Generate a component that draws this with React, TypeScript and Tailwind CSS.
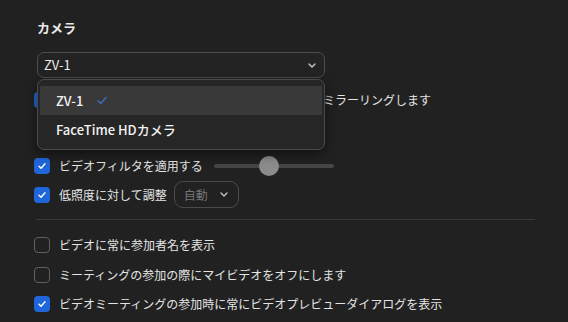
import type { ReactNode } from 'react'

const font = { fontFamily: '"Noto Sans CJK JP", "Noto Sans", sans-serif' }

function Checkbox({ checked }: { checked: boolean }) {
  if (!checked) {
    return <span className="w-4 h-4 shrink-0 rounded-[4px] border border-[#5f5f5f]" />
  }
  return (
    <span className="w-4 h-4 shrink-0 rounded-[4px] bg-[#1e66d9] flex items-center justify-center">
      <svg width="10" height="10" viewBox="0 0 10 10" fill="none">
        <path d="M2 5.2 L4.1 7.3 L8 2.8" stroke="white" strokeWidth="1.4" strokeLinecap="round" strokeLinejoin="round" />
      </svg>
    </span>
  )
}

function Chevron({ color = '#d0d0d0' }: { color?: string }) {
  return (
    <svg width="8" height="5" viewBox="0 0 8 5" fill="none">
      <path d="M1 1 L4 4 L7 1" stroke={color} strokeWidth="1.3" strokeLinecap="round" strokeLinejoin="round" />
    </svg>
  )
}

function Row({ checked, children, className = '' }: { checked: boolean; children: ReactNode; className?: string }) {
  return (
    <div className={`flex items-center h-[28px] ${className}`}>
      <Checkbox checked={checked} />
      <span className="ml-[9px] text-[12px] text-[#e4e4e4] whitespace-nowrap leading-none">{children}</span>
    </div>
  )
}

export default function App() {
  return (
    <div style={font} className="w-[568px] h-[322px] bg-[#212121] overflow-hidden pl-[34px] pt-[19px]">
      <div className="ml-[3px] h-[18px] flex items-center text-[13px] font-bold text-[#e8e8e8]">カメラ</div>

      {/* camera select + open menu */}
      <div className="relative ml-[3px] mt-[15px] w-[288px]">
        <div className="h-[26px] rounded-[7px] border border-[#4e4e4e] bg-[#232323] flex items-center justify-between pl-[6px] pr-[8px]">
          <span className="text-[13px] text-[#ececec]">ZV-1</span>
          <Chevron />
        </div>

        <div className="absolute z-10 left-0 top-[27px] w-[288px] h-[71px] rounded-[7px] border border-[#4a4a4a] bg-[#262626] shadow-[0_4px_12px_rgba(0,0,0,0.5)] pt-[6px] px-[2px]">
          <div className="h-[29px] bg-[#393939] flex items-center pl-[16px]">
            <span className="text-[13px] font-medium text-[#f2f2f2]">ZV-1</span>
            <svg className="ml-[14px]" width="10" height="9" viewBox="0 0 10 9" fill="none">
              <path d="M1 4.8 L3.7 7.5 L9 1.5" stroke="#3c6cbd" strokeWidth="1.4" strokeLinecap="round" strokeLinejoin="round" />
            </svg>
          </div>
          <div className="h-[30px] flex items-center pl-[16px]">
            <span className="text-[13px] font-medium text-[#f2f2f2]">FaceTime HDカメラ</span>
          </div>
        </div>
      </div>

      {/* row mostly hidden under the open menu */}
      <div className="mt-[8px] flex items-center h-[28px]">
        <Checkbox checked />
        <span className="ml-[201px] text-[12px] text-[#e4e4e4] whitespace-nowrap leading-none">マイビデオをミラーリングします</span>
      </div>

      <div className="mt-[38px] flex items-center h-[28px]">
        <Checkbox checked />
        <span className="ml-[9px] text-[12px] text-[#e4e4e4] whitespace-nowrap leading-none">ビデオフィルタを適用する</span>
        <div className="relative ml-[11px] w-[120px] h-[4px] rounded-full bg-[#464646]">
          <span className="absolute left-[45px] top-[-8px] w-5 h-5 rounded-full bg-[#8c8c8c]" />
        </div>
      </div>

      <div className="mt-[1px] flex items-center h-[27px]">
        <Checkbox checked />
        <span className="ml-[9px] text-[12px] text-[#e4e4e4] whitespace-nowrap leading-none">低照度に対して調整</span>
        <div className="ml-[7px] w-[65px] h-[27px] rounded-[9px] border border-[#4a4a4a] flex items-center justify-between pl-[9px] pr-[10px]">
          <span className="text-[12px] text-[#767676]">自動</span>
          <Chevron color="#c8c8c8" />
        </div>
      </div>

      <div className="ml-[2px] mt-[11px] w-[499px] h-px bg-[#393939]" />

      <Row checked={false} className="mt-[11px]">ビデオに常に参加者名を表示</Row>
      <Row checked={false} className="mt-[2px]">ミーティングの参加の際にマイビデオをオフにします</Row>
      <Row checked className="mt-[1px]">ビデオミーティングの参加時に常にビデオプレビューダイアログを表示</Row>
    </div>
  )
}
